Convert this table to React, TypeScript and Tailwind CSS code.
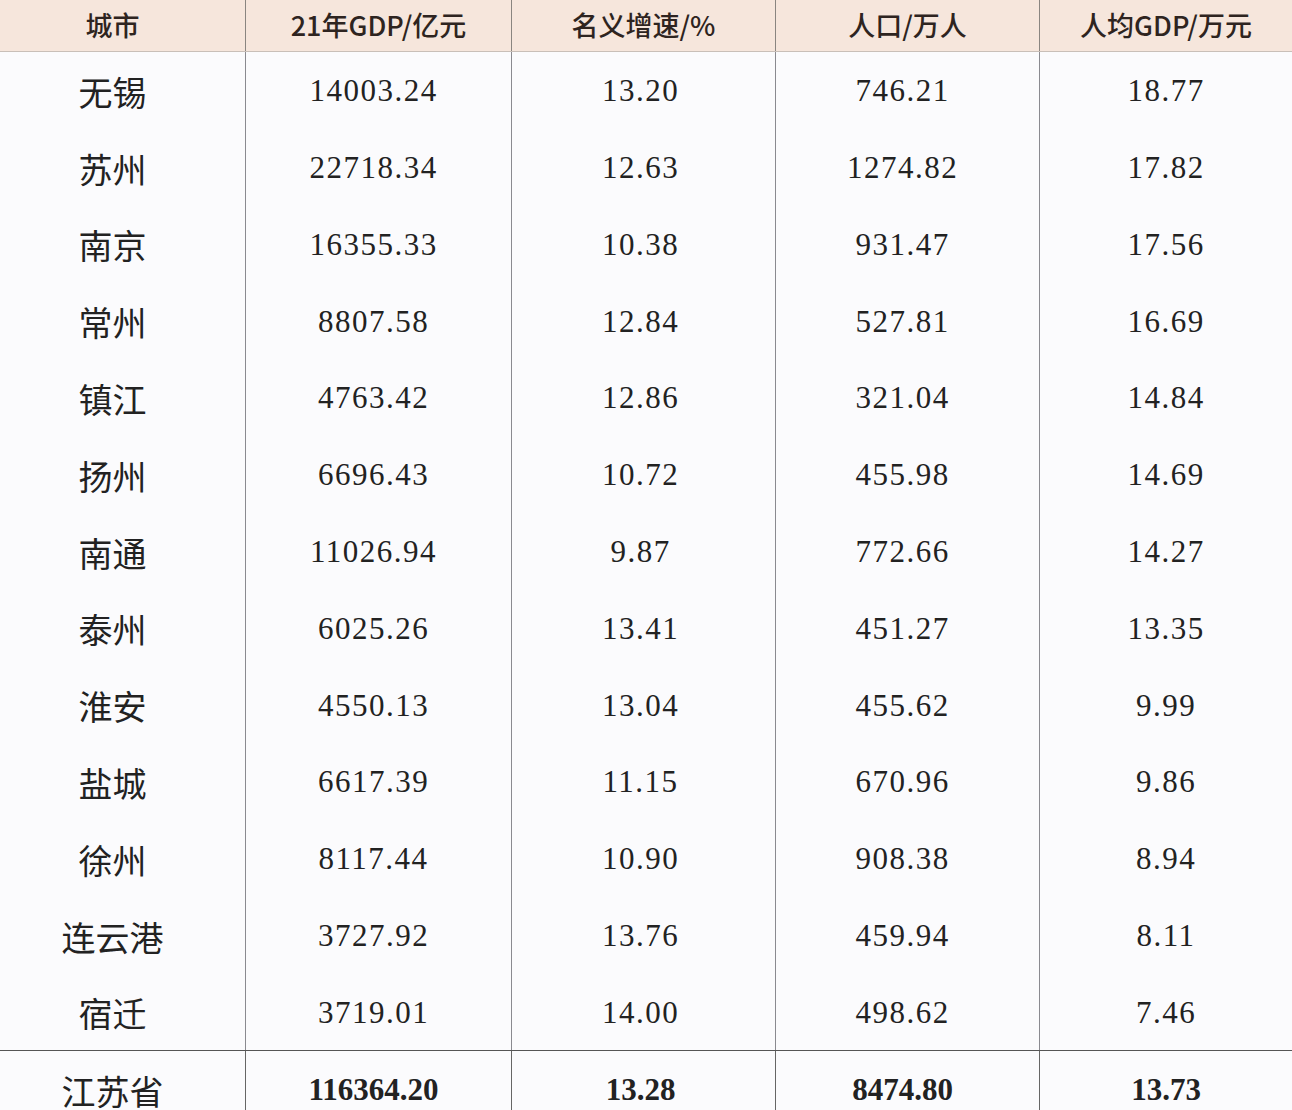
import React from "react";

const rows: [string, string, string, string, string][] = [
  ["无锡", "14003.24", "13.20", "746.21", "18.77"],
  ["苏州", "22718.34", "12.63", "1274.82", "17.82"],
  ["南京", "16355.33", "10.38", "931.47", "17.56"],
  ["常州", "8807.58", "12.84", "527.81", "16.69"],
  ["镇江", "4763.42", "12.86", "321.04", "14.84"],
  ["扬州", "6696.43", "10.72", "455.98", "14.69"],
  ["南通", "11026.94", "9.87", "772.66", "14.27"],
  ["泰州", "6025.26", "13.41", "451.27", "13.35"],
  ["淮安", "4550.13", "13.04", "455.62", "9.99"],
  ["盐城", "6617.39", "11.15", "670.96", "9.86"],
  ["徐州", "8117.44", "10.90", "908.38", "8.94"],
  ["连云港", "3727.92", "13.76", "459.94", "8.11"],
  ["宿迁", "3719.01", "14.00", "498.62", "7.46"],
];

const headers = ["城市", "21年GDP/亿元", "名义增速/%", "人口/万人", "人均GDP/万元"];
const total = ["江苏省", "116364.20", "13.28", "8474.80", "13.73"];

const cjk = "font-['Noto_Sans_CJK_SC','Noto_Sans',sans-serif]";
const serif = "font-['Liberation_Serif','Times_New_Roman',serif]";
const cols = "grid grid-cols-[245px_266px_264px_264px_253px]";
const shift = ["pr-[20px]", "pr-[10px]", "pr-[6px]", "pr-[10px]", ""];

export default function App() {
  return (
    <div className="w-[1292px] h-[1110px] overflow-hidden bg-[#fbfbfd] text-[#222]">
      <div className={`${cols} h-[52px] bg-[#f6e6dc] border-b border-[#c9bfb8]`}>
        {headers.map((h, i) => (
          <div
            key={h}
            className={`flex items-center justify-center text-[27px] font-medium text-[#2e2420] ${cjk} ${
              i > 0 ? "border-l border-[#8a8580]" : "pr-[20px]"
            }`}
          >
            {h}
          </div>
        ))}
      </div>
      {rows.map((r) => (
        <div key={r[0]} className={`${cols} h-[76.8px]`}>
          {r.map((c, i) => (
            <div
              key={i}
              className={`flex items-center justify-center ${shift[i]} ${
                i > 0 ? "border-l border-[#8a8a90]" : ""
              } ${
                i === 0
                  ? `${cjk} text-[34px] font-normal pt-[2px]`
                  : `${serif} text-[31px] tracking-[1.5px] pt-[2px]`
              }`}
            >
              {c}
            </div>
          ))}
        </div>
      ))}
      <div className={`${cols} h-[77px] border-t border-[#555]`}>
        {total.map((c, i) => (
          <div
            key={i}
            className={`flex items-center justify-center ${shift[i]} ${
              i > 0 ? "border-l border-[#666]" : ""
            } ${
              i === 0
                ? `${cjk} text-[34px] font-normal pt-[2px]`
                : `${serif} text-[31px] font-bold pt-[2px]`
            }`}
          >
            {c}
          </div>
        ))}
      </div>
    </div>
  );
}
